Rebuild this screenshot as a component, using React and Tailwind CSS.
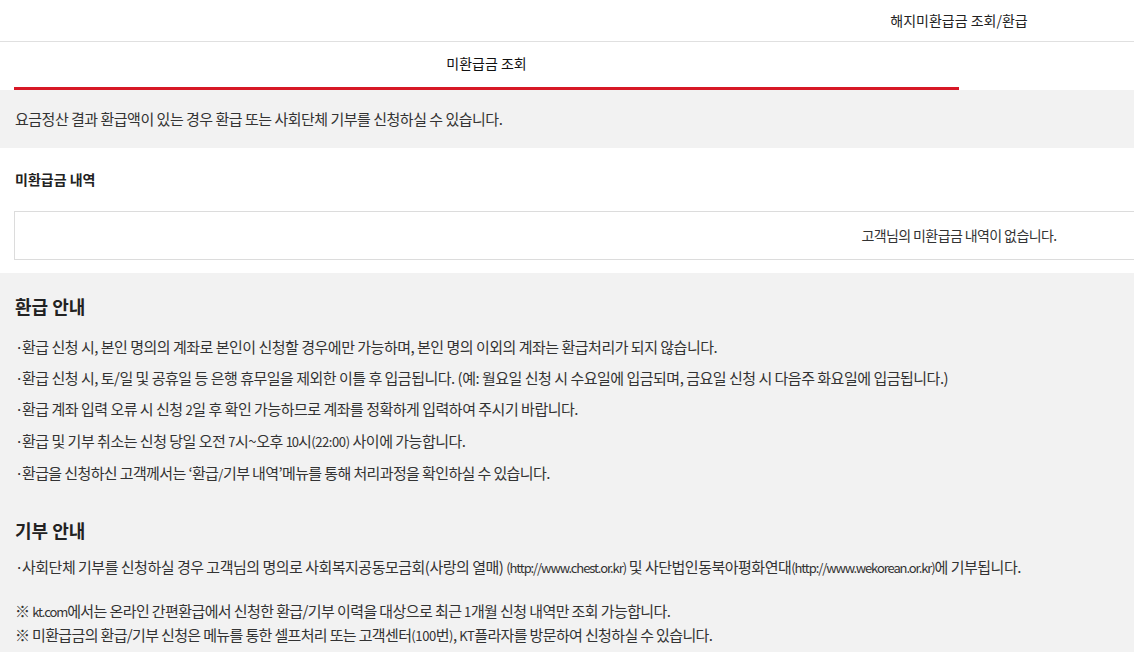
import React from "react";

// 영문/숫자 구간은 좁게 표시
const L = ({ children, wide }) => (
  <span className={wide ? "text-[13px] tracking-[-0.4px]" : "text-[13px] tracking-[-1.1px]"}>{children}</span>
);

const Bullet = ({ children, className = "" }) => (
  <li className={`flex leading-[31px] ${className}`}>
    <span className="w-[7px] shrink-0 tracking-normal">·</span>
    <span>{children}</span>
  </li>
);

const App = () => {
  return (
    <div
      className="w-full overflow-hidden bg-white text-[15px] tracking-[-0.5px] text-[#333]"
      style={{ fontFamily: '"Noto Sans CJK KR", "Noto Sans", sans-serif' }}
    >
      <div className="w-[1918px]">
        {/* 상단 타이틀 */}
        <div className="h-[42px] border-b border-[#e0e0e0] flex items-center justify-center text-[14px] tracking-normal text-[#222]">
          해지미환급금 조회/환급
        </div>

        {/* 탭 */}
        <div className="flex px-[14px] text-[14px] tracking-normal">
          <div className="flex-1 h-[48px] flex justify-center pt-[11px] text-[#111] border-b-[3px] border-[#d71826]">
            미환급금 조회
          </div>
          <div className="flex-1 h-[48px]" />
        </div>

        {/* 안내 문구 */}
        <div className="h-[58px] bg-[#f2f2f2] px-[15px] flex items-center">
          요금정산 결과 환급액이 있는 경우 환급 또는 사회단체 기부를 신청하실 수 있습니다.
        </div>

        {/* 미환급금 내역 */}
        <div className="px-[14px] pt-[21px] pb-[13px]">
          <h3 className="leading-[20px] text-[14px] tracking-normal font-bold text-[#222] pl-[1px]">미환급금 내역</h3>
          <div className="mt-[22px] h-[49px] border border-[#dcdcdc] flex items-center justify-center text-[14px] tracking-[-0.6px]">
            고객님의 미환급금 내역이 없습니다.
          </div>
        </div>

        {/* 환급/기부 안내 */}
        <div className="bg-[#f2f2f2] px-[15px] pt-[21px] pb-[20px]">
          <h2 className="text-[18px] leading-[24px] tracking-normal font-bold text-[#222]">환급 안내</h2>
          <ul className="mt-[13px]">
            <Bullet>
              환급 신청 시, 본인 명의의 계좌로 본인이 신청할 경우에만 가능하며, 본인 명의 이외의 계좌는 환급처리가 되지 않습니다.
            </Bullet>
            <Bullet>
              환급 신청 시, 토/일 및 공휴일 등 은행 휴무일을 제외한 이틀 후 입금됩니다. (예: 월요일 신청 시 수요일에 입금되며, 금요일
              신청 시 다음주 화요일에 입금됩니다.)
            </Bullet>
            <Bullet>
              환급 계좌 입력 오류 시 신청 <L wide>2</L>일 후 확인 가능하므로 계좌를 정확하게 입력하여 주시기 바랍니다.
            </Bullet>
            <Bullet>
              환급 및 기부 취소는 신청 당일 오전 <L wide>7</L>시~오후 <L>10</L>시<L wide>(22:00)</L> 사이에 가능합니다.
            </Bullet>
            <Bullet className="tracking-[-0.62px]">
              환급을 신청하신 고객께서는 ‘환급<L wide>/</L>기부 내역’메뉴를 통해 처리과정을 확인하실 수 있습니다.
            </Bullet>
          </ul>

          <h2 className="mt-[29px] text-[18px] leading-[24px] tracking-normal font-bold text-[#222]">기부 안내</h2>
          <ul className="mt-[9px]">
            <Bullet>
              사회단체 기부를 신청하실 경우 고객님의 명의로 사회복지공동모금회(사랑의 열매) <L>(http://www.chest.or.kr)</L> 및
              사단법인동북아평화연대<L>(http://www.wekorean.or.kr)</L>에 기부됩니다.
            </Bullet>
          </ul>

          <div className="mt-[16px] leading-[23px] tracking-[-0.6px]">
            <p>
              ※ <L>kt.com</L>에서는 온라인 간편환급에서 신청한 환급/기부 이력을 대상으로 최근 <L wide>1</L>개월 신청 내역만 조회
              가능합니다.
            </p>
            <p className="tracking-[-0.65px]">
              ※ 미환급금의 환급/기부 신청은 메뉴를 통한 셀프처리 또는 고객센터<L wide>(100</L>번<L wide>)</L>, <L wide>KT</L>플라자를 방문하여
              신청하실 수 있습니다.
            </p>
          </div>
        </div>
      </div>
    </div>
  );
};

export default App;
